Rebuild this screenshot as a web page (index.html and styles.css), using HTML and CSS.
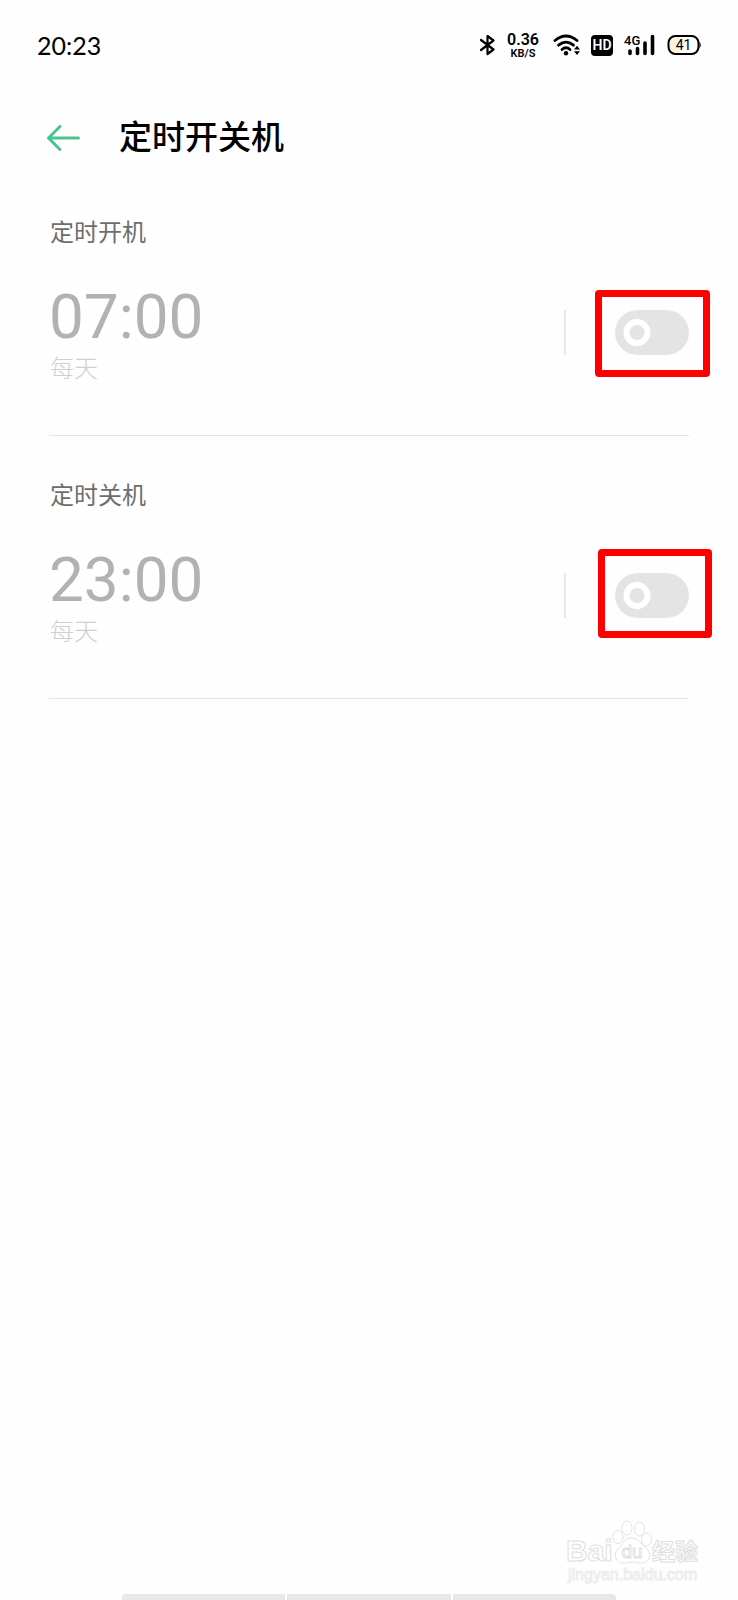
FILE: index.html
```html
<!DOCTYPE html>
<html lang="zh-CN">
<head>
<meta charset="utf-8">
<meta name="viewport" content="width=device-width, initial-scale=1">
<title>定时开关机</title>
<link rel="stylesheet" href="styles.css">
</head>
<body>
<div class="screen">
  <div class="status">
    <span class="clock">20:23</span>
    <div class="indicators">
      <svg class="bluetooth" width="16" height="22" viewBox="0 0 16 22" aria-label="蓝牙"><path d="M2 6 14.500 15.500 8.500 20V2l6 4.500L2 16" fill="none" stroke="#000" stroke-width="2.200" stroke-linejoin="round" stroke-linecap="round"/></svg>
      <div class="speed"><span class="speed-value">0.36</span><span class="speed-unit">KB/S</span></div>
      <svg class="wifi" width="28" height="22" viewBox="0 0 28 22" aria-label="WLAN"><g fill="none" stroke="#000" stroke-width="2.800" stroke-linecap="round"><path d="M2 6.500Q13 -2.500 24 6.500"/><path d="M5.500 11.200Q13 5 20.500 11.200"/><path d="M9 15.500Q13 12 17 15.500"/></g><circle cx="13" cy="19.300" r="2.200"/><path d="m21 15.500 3-3.700 3 3.700zM21 17.300l3 3.700 3-3.700z"/></svg>
      <span class="hd">HD</span>
      <svg class="signal" width="31" height="22" viewBox="0 0 31 22" aria-label="4G"><text x="0" y="11" class="signal-text">4G</text><g stroke="#000" stroke-width="3.600" stroke-linecap="round"><path d="M6 17v2.500M13.500 14.500v5M21 9v10.500M28.500 2.500v17"/></g></svg>
      <svg class="battery" width="35" height="22" viewBox="0 0 35 22" aria-label="电量 41"><rect x="1.500" y="2" width="30" height="18" rx="7" fill="#fff"/><path d="M13 2H9a7 7 0 0 0-7 7v4a7 7 0 0 0 7 7h4z" fill="#fdf3df"/><rect x="1.500" y="2" width="30" height="18" rx="7" fill="none" stroke="#000" stroke-width="2"/><path d="M32.500 7.500q2.500 3.500 0 7z"/><text x="16.500" y="16" text-anchor="middle" class="battery-text">41</text></svg>
    </div>
  </div>

  <header class="header">
    <button class="back" type="button" aria-label="返回"><svg width="33" height="26" viewBox="0 0 33 26"><path d="M13 1.500 1.500 13 13 24.500M2 13h29.500" fill="none" stroke="#4ac48c" stroke-width="3" stroke-linecap="round" stroke-linejoin="round"/></svg></button>
    <h1 class="title">定时开关机</h1>
  </header>

  <main class="list">
    <section class="item">
      <h2 class="label" id="on-label">定时开机</h2>
      <div class="row">
        <div class="when"><span class="time">07:00</span><span class="repeat">每天</span></div>
        <div class="control">
          <input class="toggle" type="checkbox" role="switch" aria-labelledby="on-label">
          <span class="mark mark-on"></span>
        </div>
      </div>
    </section>
    <section class="item">
      <h2 class="label" id="off-label">定时关机</h2>
      <div class="row">
        <div class="when"><span class="time">23:00</span><span class="repeat">每天</span></div>
        <div class="control">
          <input class="toggle" type="checkbox" role="switch" aria-labelledby="off-label">
          <span class="mark mark-off"></span>
        </div>
      </div>
    </section>
  </main>

  <div class="gesture"><span></span><span></span><span></span></div>

  <svg class="watermark" width="136" height="66" viewBox="0 0 136 66">
    <text x="0" y="41" class="wm-brand">Bai</text>
    <g class="wm-line"><ellipse cx="52" cy="17" rx="5" ry="6.500"/><ellipse cx="61" cy="8" rx="5" ry="7"/><ellipse cx="73.500" cy="9" rx="5" ry="7"/><ellipse cx="80.500" cy="19.500" rx="5" ry="6.500"/><path d="M65 18c-7 0-8 7-12 10-7 6-3 15 4 15 4 0 5-1 9-1s6 1 9 1c8 0 12-9 5-15-5-4-8-10-15-10z"/></g>
    <text x="66" y="38" text-anchor="middle" class="wm-du">du</text>
    <text x="86" y="40" class="wm-cjk">经验</text>
    <text x="2" y="60" class="wm-url">jingyan.baidu.com</text>
  </svg>
</div>
</body>
</html>
```

FILE: styles.css
```css
* { box-sizing: border-box; }

body {
  margin: 0;
  background: #fefefe;
  color: #000;
  font-family: Roboto, "Noto Sans CJK SC", sans-serif;
}

.screen {
  position: relative;
  display: flex;
  flex-direction: column;
  min-height: 100vh;
}

.status {
  display: flex;
  align-items: center;
  justify-content: space-between;
  height: 90px;
  padding: 0 36px 0 37px;
}

.clock { font: 25px/30px Lato, sans-serif; }

.indicators { display: flex; align-items: center; }

.speed {
  display: flex;
  flex-direction: column;
  align-items: center;
  width: 34px;
  margin: 0 13px 0 11px;
  font-weight: 600;
}

.speed-value { font-size: 16px; line-height: 16px; }
.speed-unit { font-size: 11px; line-height: 11px; }

.hd {
  width: 22px;
  margin: 0 11px 0 10px;
  border-radius: 4px;
  background: #000;
  color: #fff;
  font-size: 14px;
  font-weight: 600;
  line-height: 21px;
  text-align: center;
}

.signal-text { font-size: 13px; font-weight: 500; }
.battery { margin-left: 12px; }
.battery-text { font-size: 14px; }

.header {
  display: flex;
  align-items: center;
  gap: 39px;
  height: 95px;
  padding: 0 47px;
}

.back {
  display: flex;
  padding: 0;
  border: 0;
  background: none;
}

.title {
  margin: 0;
  font-size: 33px;
  font-weight: 500;
  line-height: 48px;
}

.list { padding: 0 49px; }

.item {
  height: 263px;
  padding: 28px 0 0;
  border-bottom: 1px solid #e4e4e4;
}

.item:first-child { margin-top: -12px; }

.label {
  margin: 0;
  padding-left: 1px;
  color: #6d6d6d;
  font-size: 24px;
  font-weight: 400;
  line-height: 64px;
}

.row {
  display: flex;
  align-items: flex-start;
  justify-content: space-between;
  padding-top: 20px;
}

.when { display: flex; flex-direction: column; }

.time {
  color: #b2b2b2;
  font-size: 62px;
  line-height: 64px;
}

.repeat {
  padding-left: 1px;
  color: #d0d0d0;
  font-size: 24px;
  font-weight: 300;
  line-height: 40px;
}

.control {
  position: relative;
  margin-top: 25px;
  padding-left: 49px;
  border-left: 2px solid #e8e8e8;
}

.toggle {
  display: block;
  appearance: none;
  width: 74px;
  height: 45px;
  margin: 0;
  border-radius: 23px;
  background: radial-gradient(circle at 22px 50%, #e4e4e4 7px, #fff 8px, #fff 13px, #e4e4e4 14px);
}

.mark {
  position: absolute;
  border: 7px solid #f00;
  border-radius: 4px;
  pointer-events: none;
}

.mark-on { inset: -20px -21px -22px 29px; }
.mark-off { inset: -24px -23px -20px 32px; }

.gesture {
  display: flex;
  gap: 2px;
  width: 67%;
  height: 6px;
  margin: auto auto 0;
  border-radius: 4px 4px 0 0;
  overflow: hidden;
}

.gesture span { flex: 1; background: #e8e8e8; }

.watermark {
  position: absolute;
  right: 36px;
  bottom: 14px;
}

.wm-line { fill: #fff; stroke: #e2e2e2; }

.wm-brand, .wm-du, .wm-cjk, .wm-url {
  fill: #fff;
  stroke: #dedede;
  font-family: "Liberation Sans", "Noto Sans CJK SC", sans-serif;
}

.wm-brand { font-size: 30px; font-weight: 700; }
.wm-du { font-size: 19px; }
.wm-cjk { font-size: 23px; font-weight: 700; }
.wm-url { font-size: 16px; stroke: #ececec; }
```
